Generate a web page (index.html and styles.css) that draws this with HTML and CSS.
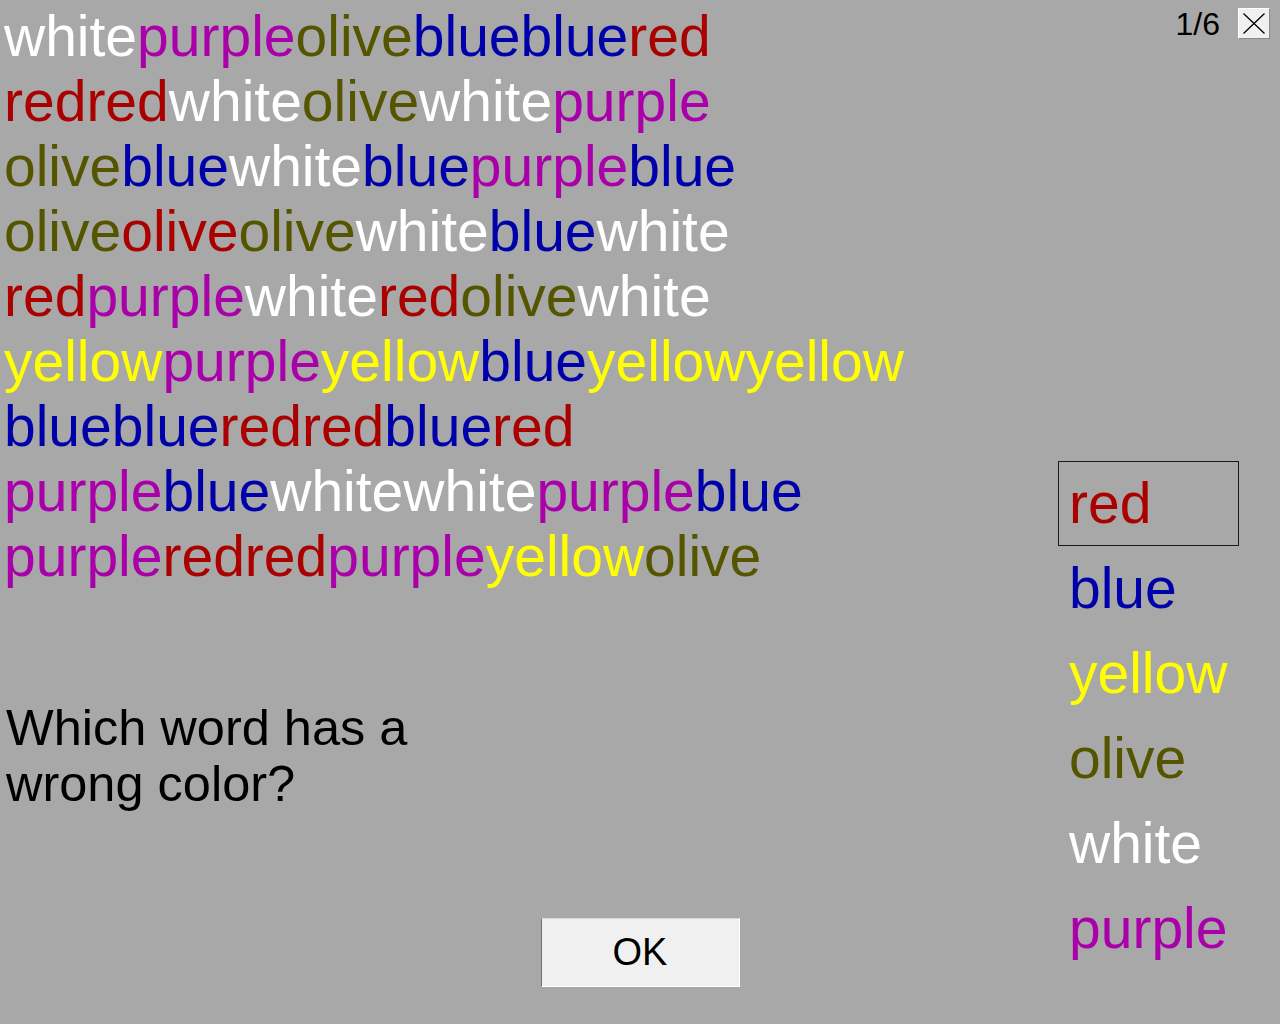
FILE: index.html
```html
<!DOCTYPE html>
<html lang="en">
<head>
<meta charset="utf-8">
<title>Color words</title>
<link rel="stylesheet" href="styles.css">
</head>
<body>
<div class="screen">
  <div class="words">
    <div class="line"><span class="c-white">white</span><span class="c-purple">purple</span><span class="c-olive">olive</span><span class="c-blue">blue</span><span class="c-blue">blue</span><span class="c-red">red</span></div>
    <div class="line"><span class="c-red">red</span><span class="c-red">red</span><span class="c-white">white</span><span class="c-olive">olive</span><span class="c-white">white</span><span class="c-purple">purple</span></div>
    <div class="line"><span class="c-olive">olive</span><span class="c-blue">blue</span><span class="c-white">white</span><span class="c-blue">blue</span><span class="c-purple">purple</span><span class="c-blue">blue</span></div>
    <div class="line"><span class="c-olive">olive</span><span class="c-red">olive</span><span class="c-olive">olive</span><span class="c-white">white</span><span class="c-blue">blue</span><span class="c-white">white</span></div>
    <div class="line"><span class="c-red">red</span><span class="c-purple">purple</span><span class="c-white">white</span><span class="c-red">red</span><span class="c-olive">olive</span><span class="c-white">white</span></div>
    <div class="line"><span class="c-yellow">yellow</span><span class="c-purple">purple</span><span class="c-yellow">yellow</span><span class="c-blue">blue</span><span class="c-yellow">yellow</span><span class="c-yellow">yellow</span></div>
    <div class="line"><span class="c-blue">blue</span><span class="c-blue">blue</span><span class="c-red">red</span><span class="c-red">red</span><span class="c-blue">blue</span><span class="c-red">red</span></div>
    <div class="line"><span class="c-purple">purple</span><span class="c-blue">blue</span><span class="c-white">white</span><span class="c-white">white</span><span class="c-purple">purple</span><span class="c-blue">blue</span></div>
    <div class="line"><span class="c-purple">purple</span><span class="c-red">red</span><span class="c-red">red</span><span class="c-purple">purple</span><span class="c-yellow">yellow</span><span class="c-olive">olive</span></div>
  </div>

  <div class="question">Which word has a<br>wrong color?</div>

  <button class="ok" type="button">OK</button>

  <div class="side">
    <div class="status">
      <span class="counter">1/6</span>
      <span class="close" aria-label="Close">
        <svg width="30" height="29" viewBox="0 0 30 29">
          <path d="M4.5 4.5 L25.5 24.5 M25.5 4.5 L4.5 24.5" stroke="#000" stroke-width="1.3" fill="none"/>
        </svg>
      </span>
    </div>
    <div class="options">
      <div class="opt selected c-red">red</div>
      <div class="opt c-blue">blue</div>
      <div class="opt c-yellow">yellow</div>
      <div class="opt c-olive">olive</div>
      <div class="opt c-white">white</div>
      <div class="opt c-purple">purple</div>
    </div>
  </div>
</div>
</body>
</html>
```

FILE: styles.css
```css
html, body {
  margin: 0;
  padding: 0;
}

body {
  background: #a8a8a8;
  font-family: "Liberation Sans", Arial, sans-serif;
  color: #000;
}

.screen {
  width: 1280px;
  height: 1024px;
  display: grid;
  grid-template-columns: 1058px 222px;
  grid-template-rows: auto auto 1fr;
}

.words {
  grid-column: 1;
  grid-row: 1;
  padding: 4px 0 0 4px;
  font-size: 57px;
  line-height: 65px;
  white-space: nowrap;
}

.line {
  height: 65px;
}

.c-white { color: #ffffff; }
.c-purple { color: #aa00aa; }
.c-olive { color: #555500; }
.c-blue { color: #0000aa; }
.c-red { color: #aa0000; }
.c-yellow { color: #ffff00; }

.question {
  grid-column: 1;
  grid-row: 2;
  margin-top: 111px;
  padding-left: 6px;
  font-size: 50.5px;
  line-height: 56px;
  color: #000;
}

.ok {
  grid-column: 1 / -1;
  grid-row: 3;
  justify-self: center;
  align-self: start;
  margin: 106px 0 0 0;
  width: 199px;
  height: 69px;
  padding: 0;
  box-sizing: border-box;
  background: #f0f0f0;
  border: 1px solid;
  border-color: #d8d8d8 #ffffff #ffffff #707070;
  font-family: "Liberation Sans", Arial, sans-serif;
  font-size: 38px;
  line-height: 67px;
  color: #000;
  text-align: center;
}

.side {
  grid-column: 2;
  grid-row: 1 / -1;
  display: flex;
  flex-direction: column;
  justify-content: space-between;
  padding: 8px 10px 53px 0;
}

.status {
  display: flex;
  align-items: flex-start;
  justify-content: flex-end;
  gap: 18px;
}

.counter {
  font-size: 32px;
  line-height: 32px;
  color: #000;
}

.close {
  display: flex;
  width: 32px;
  height: 31px;
  box-sizing: border-box;
  background: #f0f0f0;
  border: 1px solid;
  border-color: #ffffff #8a8a8a #8a8a8a #ffffff;
}

.options {
  display: flex;
  flex-direction: column;
}

.opt {
  width: 181px;
  height: 85px;
  box-sizing: border-box;
  border: 1px solid transparent;
  padding-left: 10px;
  font-size: 57px;
  line-height: 83px;
  white-space: nowrap;
}

.opt.selected {
  border-color: #1a1a1a;
}
```
